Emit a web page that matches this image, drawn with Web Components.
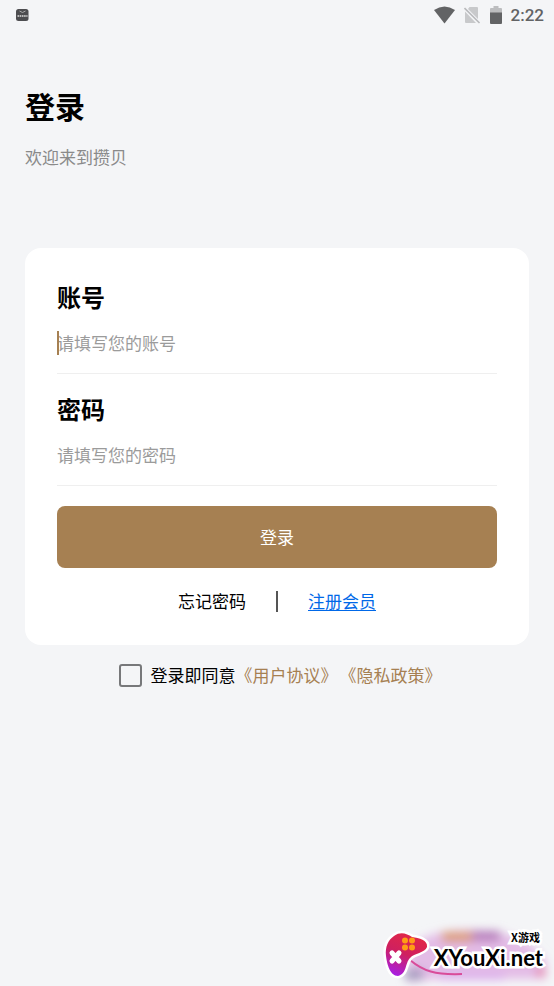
<!DOCTYPE html>
<html lang="zh-CN">
<head>
<meta charset="utf-8">
<meta name="viewport" content="width=device-width, initial-scale=1">
<title>登录</title>
<style>
  html, body { height: 100%; }
  body {
    margin: 0;
    background: #f4f5f7;
    color: #000;
    font-family: "Noto Sans CJK SC", sans-serif;
    font-size: 17px;
    line-height: 24px;
  }
</style>
</head>
<body>
<login-page></login-page>

<script>
  function define(name, html, setup) {
    const template = document.createElement('template');
    template.innerHTML = html;
    customElements.define(name, class extends HTMLElement {
      constructor() {
        super();
        this.attachShadow({ mode: 'open' }).append(template.content.cloneNode(true));
      }
      connectedCallback() {
        if (setup) setup(this, this.shadowRoot);
      }
    });
  }

  define('status-bar', `
    <style>
      :host { display: flex; align-items: center; height: 30px; padding: 0 10px 0 16px; box-sizing: border-box; }
      svg { display: block; }
      .icons { display: flex; align-items: center; gap: 9px; margin-left: auto; }
      time { font: 500 17px/20px Roboto, sans-serif; color: #626365; }
    </style>
    <svg width="13" height="13" viewBox="0 0 13 13" aria-hidden="true">
      <rect width="12.500" height="12" rx="2.500" fill="#4d4d50"/>
      <path d="M3.500 2q3 3 6 0" fill="none" stroke="#aaa" stroke-width="1"/>
      <path d="M1.500 7h10" stroke="#bbb" stroke-width="1.800" stroke-dasharray="1.600 .6"/>
    </svg>
    <div class="icons">
      <svg width="21" height="18" viewBox="0 0 21 18" aria-hidden="true">
        <path d="M0 4Q10.500 -3 21 4L10.500 17.500z" fill="#626365"/>
      </svg>
      <svg width="17" height="18" viewBox="0 0 17 18" aria-hidden="true">
        <path d="M5.500 1H13q1 0 1 1v11L4 3zM1 5.500L12 17H2q-1 0-1-1z" fill="#c8c9cb"/>
        <path d="M.5 2L15.500 17" stroke="#b8b9bb" stroke-width="1.600"/>
      </svg>
      <svg width="12" height="18" viewBox="0 0 12 18" aria-hidden="true">
        <path d="M0 7V3q0-1 1-1h2.500V0h5v2H11q1 0 1 1v4z" fill="#bcbdbf"/>
        <path d="M0 6.500h12V17q0 1-1 1H1q-1 0-1-1z" fill="#626365"/>
      </svg>
      <time>2:22</time>
    </div>
  `);

  define('page-heading', `
    <style>
      :host { display: block; padding: 55px 25px 0; }
      h1 { margin: 0; font-size: 30px; line-height: 40px; font-weight: 700; }
      p { margin: 20px 0 0; color: #8a8a8a; }
    </style>
    <h1><slot></slot></h1>
    <p><slot name="subtitle"></slot></p>
  `);

  define('text-field', `
    <style>
      :host { display: block; }
      label { display: block; font-size: 24px; line-height: 34px; font-weight: 700; }
      .box { position: relative; padding: 17px 0 18px; border-bottom: 1px solid #efefef; }
      input {
        display: block; width: 100%; height: 24px; padding: 0; border: 0; outline: 0;
        background: none; font: inherit; color: #000; caret-color: #a68052;
      }
      input::placeholder { color: #9b9b9b; opacity: 1; }
      :host([active]) .box::before {
        content: ""; position: absolute; left: 0; top: 17px; width: 2px; height: 24px; background: #a68052;
      }
    </style>
    <label for="control"></label>
    <div class="box"><input id="control"></div>
  `, (host, root) => {
    root.querySelector('label').textContent = host.getAttribute('label');
    const input = root.querySelector('input');
    input.type = host.getAttribute('type') || 'text';
    input.placeholder = host.getAttribute('placeholder');
  });

  define('primary-button', `
    <style>
      :host { display: block; }
      button {
        display: block; width: 100%; height: 62px; border: 0; border-radius: 8px;
        background: #a68052; color: #fff; font: inherit; cursor: pointer;
      }
    </style>
    <button type="button"><slot></slot></button>
  `);

  define('account-links', `
    <style>
      :host { display: flex; justify-content: center; align-items: center; gap: 30px; }
      a { color: #000; text-decoration: none; }
      a.register { color: #0068e8; text-decoration: underline; text-underline-offset: 2px; }
      i { width: 2px; height: 21px; background: #555; }
    </style>
    <a href="#forgot">忘记密码</a><i></i><a class="register" href="#register">注册会员</a>
  `);

  define('login-card', `
    <style>
      :host {
        display: flex; flex-direction: column; margin: 79px 25px 0; padding: 32px;
        border-radius: 16px; background: #fff;
      }
      text-field + text-field { margin-top: 18px; }
      primary-button { margin: 20px 0 21px; }
    </style>
    <text-field label="账号" placeholder="请填写您的账号" active></text-field>
    <text-field label="密码" placeholder="请填写您的密码" type="password"></text-field>
    <primary-button>登录</primary-button>
    <account-links></account-links>
  `);

  define('consent-row', `
    <style>
      :host { display: flex; justify-content: center; align-items: center; padding: 18px 0 0 6px; }
      input {
        appearance: none; width: 23px; height: 23px; margin: 0 9px 0 0; box-sizing: border-box;
        border: 2px solid #77787a; border-radius: 3px; background: transparent;
      }
      input:checked { background: #a68052; }
      a { color: #a68052; text-decoration: none; }
      a + a { margin-left: 2px; }
    </style>
    <input type="checkbox" id="agree"><label for="agree">登录即同意</label><a href="#terms">《用户协议》</a><a href="#privacy">《隐私政策》</a>
  `);

  define('site-badge', `
    <style>
      :host { position: absolute; right: 0; bottom: 0; width: 180px; height: 66px; overflow: hidden; color: #000; }
      svg { display: block; }
      span { position: absolute; font-weight: 700; white-space: nowrap; -webkit-text-stroke: 5px #fff; paint-order: stroke fill; }
      .tag { right: 14px; top: 9px; font-size: 11px; line-height: 16px; }
      .name { right: 11px; top: 25px; font-family: Lato, sans-serif; font-size: 22px; line-height: 26px; }
    </style>
    <svg width="180" height="66" viewBox="0 0 180 66" aria-hidden="true">
      <defs>
        <filter id="soft" x="-30%" y="-60%" width="160%" height="220%"><feGaussianBlur stdDeviation="5"/></filter>
        <linearGradient id="pad" x1="0.700" y1="0" x2="0.300" y2="1">
          <stop offset="0" stop-color="#e32845"/><stop offset=".5" stop-color="#cf205f"/><stop offset="1" stop-color="#a91fe0"/>
        </linearGradient>
      </defs>
      <g filter="url(#soft)">
        <path d="M35 27Q60 8 100 10T158 26L172 40V59H60L34 63z" fill="#e3bce6"/>
        <path d="M68 12h30v10H68z" fill="#dc9c70"/>
        <path d="M98 11h28v10H98z" fill="#b57aba"/>
        <path d="M31 49h18v11H31z" fill="#a69fc0"/>
        <path d="M65 53h65v7H65z" fill="#dcaeec"/>
        <path d="M162 48h9v8h-9z" fill="#e884a5"/>
      </g>
      <path d="M36 40C49 51 61 55 88 54" fill="none" stroke="#d94c9a" stroke-width="2"/>
      <path d="M20 16C27 11 33 14 38 17C45 18 54 20 53 27C51 33 40 33 36 38C31 43 33 54 24 56C16 56 13 44 12 36C11 27 14 20 20 16Z"
            fill="url(#pad)" stroke="#fff" stroke-width="5" stroke-linejoin="round" paint-order="stroke"/>
      <g fill="#ff9d16"><circle cx="31" cy="20.500" r="3"/><circle cx="38" cy="20.500" r="3"/><circle cx="31" cy="27.500" r="3"/><circle cx="38" cy="27.500" r="3"/></g>
      <path d="M18 33L25 41M25 33L18 41" stroke="#fff" stroke-width="5" stroke-linecap="round"/>
    </svg>
    <span class="name">XYouXi.net</span>
    <span class="tag">X游戏</span>
  `);

  define('login-page', `
    <style>
      :host { display: block; position: relative; min-height: 100%; }
      main { display: block; }
    </style>
    <status-bar></status-bar>
    <main>
      <page-heading>登录<span slot="subtitle">欢迎来到攒贝</span></page-heading>
      <login-card></login-card>
      <consent-row></consent-row>
    </main>
    <site-badge></site-badge>
  `);
</script>
</body>
</html>
